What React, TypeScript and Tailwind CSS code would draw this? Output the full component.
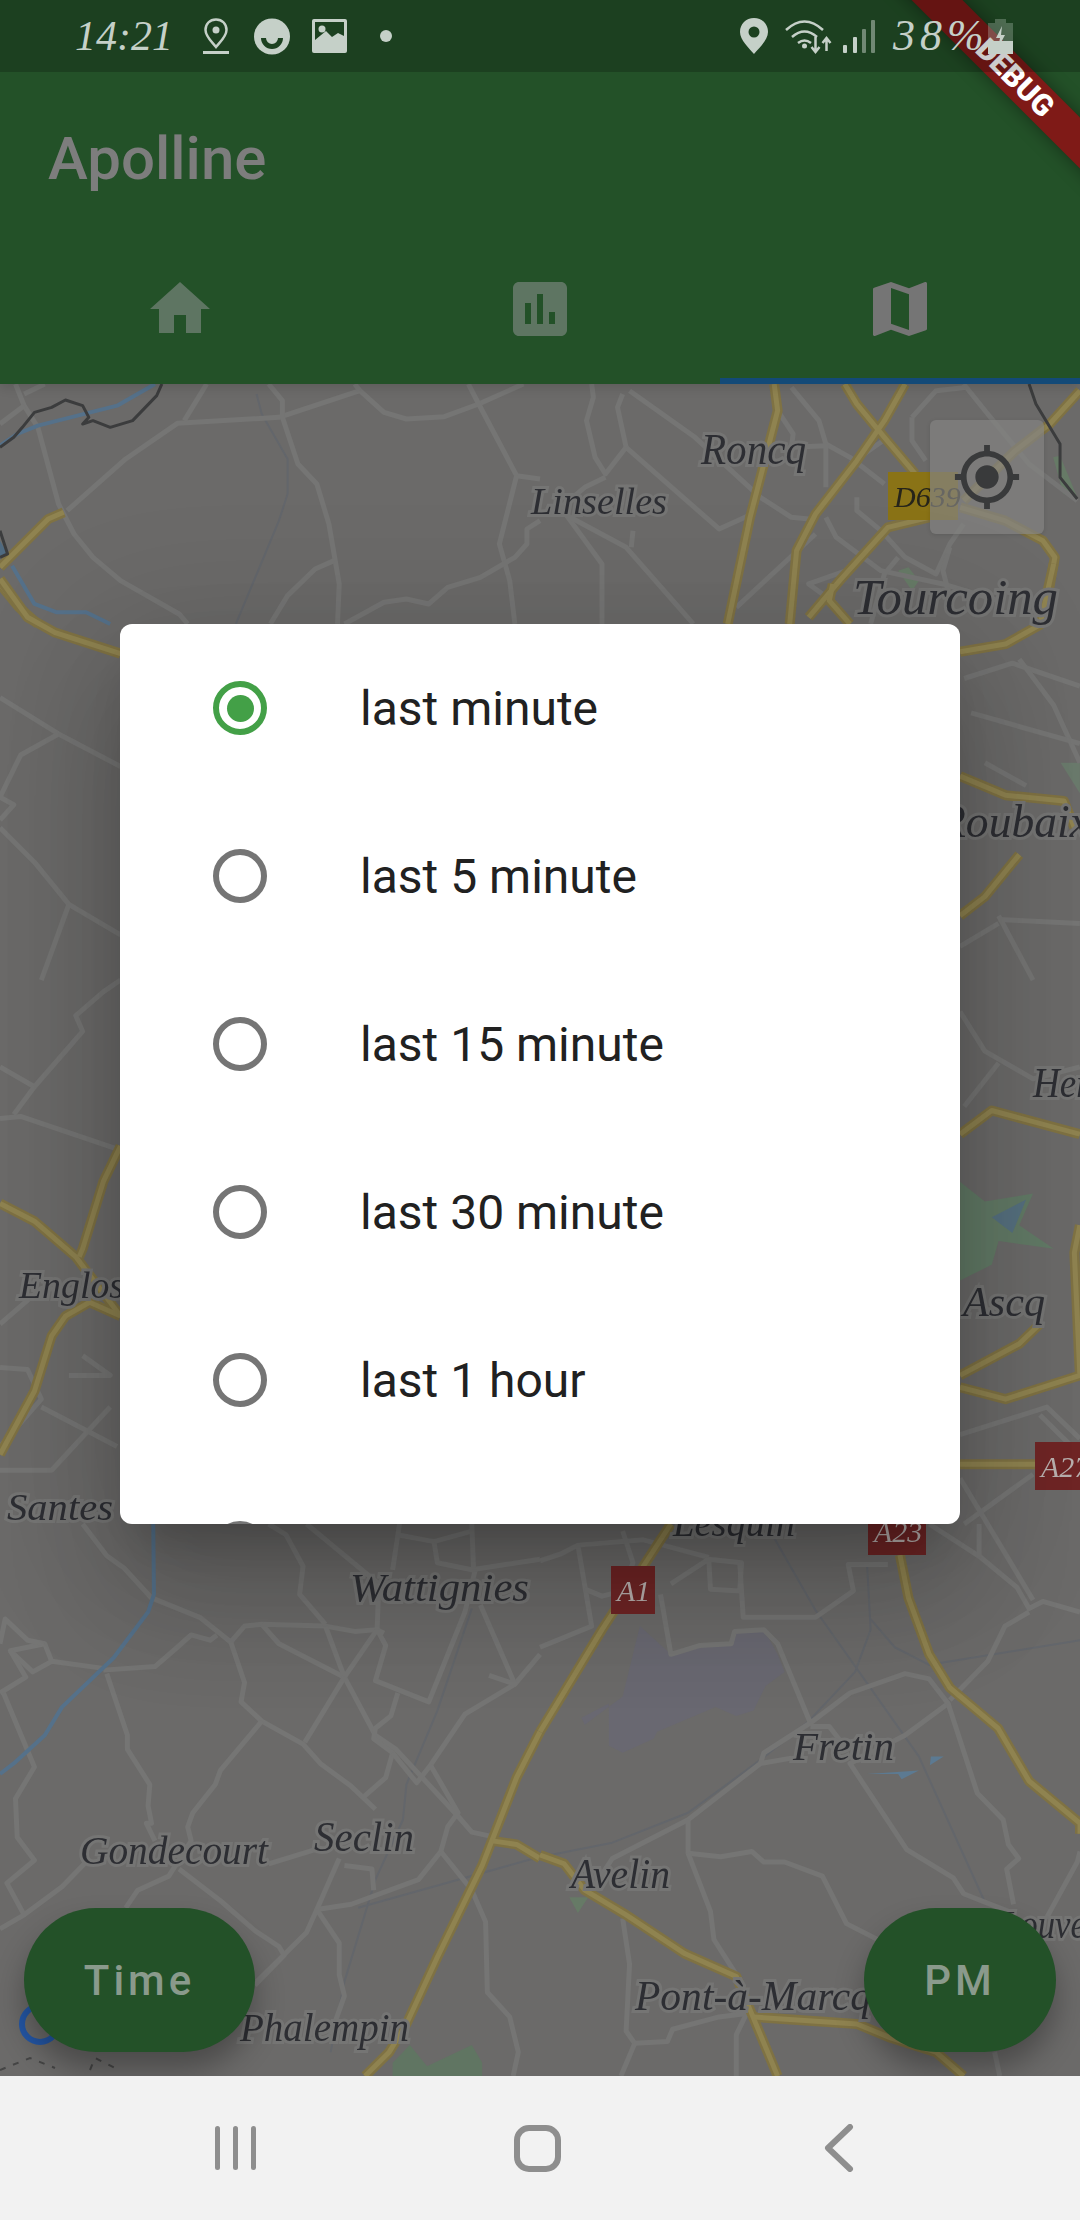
import { MdAssessment, MdGpsFixed, MdHome, MdMap } from 'react-icons/md'

type Region = {
  at: string
  areas?: [string, string][]
  minor?: string[]
  rail?: string[]
  water?: string[]
  border?: string[]
  highway?: string[]
}

// traced per crop, so every group has its own scale
const regions: Region[] = [
  {
    at: 'translate(0 384) scale(.3444 .3333)',
    areas: [['#4f6a80', '0,470 22,510 0,520']],
    minor: [
      '45,0 70,65 110,130 170,360 215,450 270,520 350,590 520,690 545,720',
      '0,120 70,65',
      '70,30 130,0',
      '195,380 365,225 515,118 810,100 1045,20 1115,85 1180,105 1290,98 1390,60 1520,0',
      '600,0 535,110',
      '1045,20 1030,0',
      '780,0 820,50 820,100 865,240 920,300 955,420 985,600 980,720',
      '1360,0 1390,60 1500,275 1568,285',
      '1500,275 1450,480 1480,590 1495,720',
      '970,530 915,555 835,635 785,720',
      '1568,410 1530,435 1530,480 1495,520 1395,580 1300,610 1245,660 1180,645 1115,655 1000,720',
    ],
    rail: ['745,30 760,90 835,225 835,330 810,410 685,720'],
    water: ['0,185 50,150 110,125 340,65 450,0', '35,545 100,660 165,685 250,685 320,720'],
    border: [
      '470,0 455,35 385,110 320,130 270,110 240,120 258,100 240,65 190,48 150,70 100,85 65,130 40,160 0,190',
      '0,440 22,510 0,520',
    ],
    highway: ['185,385 140,405 0,550', '0,600 55,670 110,720'],
  },
  {
    at: 'translate(540 384) scale(.3444 .3333)',
    areas: [
      ['#667a66', '1040,560 1070,550 1100,590 1080,620'],
      ['#667a66', '1490,220 1510,215 1560,340 1520,330'],
    ],
    minor: [
      '150,0 155,40 135,110 160,220 190,270 250,190 520,435 605,395',
      '240,30 225,70 250,190',
      '260,20 450,160 640,340 730,400 780,405',
      '190,280 130,310 60,370 180,540 180,720',
      '70,390 250,490 445,720',
      '270,440 265,490',
      '730,10 810,110 830,180 900,220 1000,300',
      '690,80 735,150 730,190 830,185 830,310',
      '1080,100 1150,20 1240,10',
      '1080,100 1080,170 1120,230',
      '1010,160 900,240',
      '830,400 860,460 990,560 1170,600 1330,650',
      '800,450 570,670',
      '890,560 780,600 860,660',
      '1040,520 1000,570 960,720',
      '1230,0 1300,90 1420,240 1560,350',
      '920,340 920,380 990,440 1060,520 1150,570 1190,480 1230,420',
      '1190,490 1170,560 1190,640',
    ],
    border: ['1420,0 1440,60 1510,180 1510,280 1560,345'],
    highway: [
      '680,0 690,80 610,400 545,720',
      '885,0 920,60 1000,160 1090,270',
      '1060,0 1000,110 920,230 800,390 745,500 725,720',
      '1130,400 1010,430 870,590 780,700',
      '850,600 840,650 900,720',
      '1568,20 1480,120 1380,200 1230,350',
      '1220,370 1350,410 1460,470 1495,520 1470,660 1440,720',
    ],
  },
  {
    at: 'translate(0 380) scale(.6887 .3827)',
    areas: [['#6a7a6c', '1540,1000 1568,1000 1568,1080']],
    minor: [
      '0,830 85,925 175,1010',
      '85,925 30,980 0,1090 20,1110 0,1150',
      '0,1170 50,1260 100,1370 175,1450',
      '100,1370 60,1568',
      '1400,780 1470,740 1568,800',
      '1480,730 1530,850 1568,1000',
      '1410,870 1568,950',
      '1430,1000 1490,1060',
      '1450,1410 1568,1420',
      '1450,1400 1500,1568',
      '1394,1480 1450,1420',
    ],
    highway: [
      '0,520 40,620 80,660 175,715',
      '1394,710 1460,690 1510,640 1530,480',
      '1394,1035 1460,1085 1545,1100 1560,1170',
      '1480,1240 1430,1350 1394,1400',
    ],
  },
  {
    at: 'translate(0 980) scale(.6887 .3954)',
    areas: [
      ['#627a66', '1394,510 1430,560 1500,540 1480,620 1530,680 1450,660 1440,720 1394,760'],
      ['#56707f', '1394,590 1440,600 1490,555 1470,640 1440,600'],
    ],
    minor: [
      '175,0 150,30 110,90 120,130 50,270 0,220',
      '0,350 30,345 175,430',
      '50,270 20,340',
      '0,870 60,780 175,790',
      '120,950 160,1000 100,1000',
      '0,980 40,985 60,1060 0,1180',
      '60,1080 170,1180',
      '0,1240 75,1240 160,1080',
      '1394,80 1430,180 1500,250 1568,220',
      '1400,320 1450,210',
      '1394,1150 1520,1080 1568,1160',
      '1400,1376 1500,1250',
      '1394,1260 1500,1568',
      '1510,1100 1568,1200',
    ],
    highway: [
      '0,565 50,610 110,700 175,850',
      '175,420 150,510 120,680 115,700',
      '175,850 130,815 95,850 75,900 50,1040 0,1200',
      '1394,390 1440,330 1568,390',
      '1394,1000 1480,920 1510,870',
      '1394,1030 1460,1060 1568,1000 1560,690 1568,620',
      '1394,1225 1510,1225',
    ],
  },
  {
    at: 'translate(0 1524) scale(.3444 .3521)',
    areas: [['#607562', '1140,1530 1190,1480 1240,1540 1370,1480 1400,1530 1400,1568 1140,1568']],
    minor: [
      '240,0 310,90 360,125 440,210 580,265 670,335 710,290 760,285 945,290 1030,305 1095,300 1120,345 1090,445 1245,505 1350,250 1380,130',
      '670,335 710,450 700,505 760,560 880,625 930,680 1020,745 1090,810',
      '760,560 640,700 625,740 560,820 545,860 555,900 490,1000 400,1040 365,1090',
      '300,410 150,390 95,420 30,360 130,340 150,390',
      '0,340 15,270 80,330 130,340',
      '0,480 75,435 30,360',
      '300,415 450,405 515,350 555,315 610,330 630,315',
      '310,425 370,600 370,640 435,740 430,800 440,850 425,850 450,900',
      '10,480 100,690 45,780 50,890 100,955 20,1020 70,1110 0,1150',
      '70,1110 180,1030 250,960',
      '520,980 640,1070 740,1155 810,1200 825,1225 740,1310',
      '760,285 810,340 1000,435 1090,600 1150,640 1330,830 1370,875 1440,890',
      '945,290 1000,435 885,620',
      '1000,435 1095,300 1115,310',
      '1155,480 1135,545 1090,580 1085,610 1140,650 1120,720 1050,780',
      '1495,455 1350,540 1250,685 1210,735 1140,650',
      '1250,685 1330,820 1300,860 1280,930 1215,1010 1020,1080 920,1095 890,1160 745,1300',
      '1280,930 1370,1040 1410,1130 1415,1330 1480,1400 1505,1500 1490,1568',
      '920,1095 985,1190 985,1280 1000,1340 960,1450',
      '1495,455 1568,370',
      '1420,430 1495,455 1395,230',
      '780,965 915,925',
      '985,950 920,1095',
      '1000,970 1080,980 1085,1040',
      '1150,30 1260,50 1270,110 1370,130 1568,100',
      '1160,0 1140,130',
      '1260,50 1370,20',
      '1370,0 1375,130',
      '780,0 830,30 880,120 870,200 945,285',
      '890,0 1100,170 1095,300',
    ],
    rail: ['1370,240 1270,530 1180,740 1170,840 1090,1010 1000,1300 960,1500', '1040,1090 1568,945'],
    water: ['445,0 447,200 430,250 330,380 180,520 130,600 40,680 0,710'],
    highway: ['1568,590 1500,720 1400,970 1270,1230 1180,1420 1130,1500 1060,1568', '1430,900 1500,910 1568,950'],
  },
  {
    at: 'translate(540 1524) scale(.3444 .3521)',
    areas: [
      [
        '#696871',
        '290,290 380,370 470,345 555,340 565,305 650,300 690,370 710,420 655,460 620,530 570,545 510,520 340,590 330,610 240,650 200,630 200,510 120,550 130,570 240,490',
      ],
      ['#667a66', '85,1060 140,1060 110,1105'],
      ['#5c7a92', '950,710 1100,700 1050,725 1040,710'],
      ['#5c7a92', '1135,660 1172,660 1132,685'],
    ],
    minor: [
      '0,105 60,85 110,60 240,50 300,45 490,95',
      '110,60 150,290 0,350',
      '240,20 270,110 240,190 180,205 130,185',
      '350,200 380,370 465,345 555,340 565,305 650,300 690,340 785,565 900,480 1060,425 1130,440 1185,510 1060,600 900,680 1065,925 1200,1005 1230,1050 1360,1100',
      '380,170 490,100 585,110 580,190 495,185 490,100',
      '580,110 590,265 800,265 910,190 895,115 1010,115',
      '1185,510 1270,765 1345,840 1360,910 1390,950 1355,980 1375,1080',
      '1130,0 1280,95 1385,180 1420,240 1460,220 1568,250',
      '1275,0 1275,95',
      '1420,250 1350,290 1300,390 1190,500',
      '785,575 840,575 875,620',
      '785,565 650,650 640,680 730,665',
      '640,680 430,840 210,950 150,1040',
      '430,840 430,935 525,945 615,930 650,960 710,960 820,1000 890,1135 1000,1190',
      '430,935 495,1100 505,1180 570,1280',
      '240,1120 260,1250 250,1440 275,1475 370,1470 385,1435 520,1400 600,1390',
      '275,1475 235,1568',
      '600,1390 570,1450 570,1568',
      '1568,930 1560,960 1470,1120',
      '1320,1500 1335,1568',
    ],
    rail: [
      '680,40 800,245 1100,660 1290,1070',
      '950,120 960,300 915,420 780,560 640,670 430,820 210,905 30,940',
      '960,270 1030,350 1130,400 1568,330',
    ],
    highway: [
      '380,0 300,120 180,300 0,590',
      '1045,88 1070,210 1130,370 1190,465 1330,580 1420,730 1568,850 1568,880',
      '0,940 70,965 130,1040 250,1110 420,1220 570,1285 610,1380 690,1568',
      '620,1400 920,1420 1020,1460 1150,1500 1230,1568',
    ],
  },
]

const labels = [
  { text: 'Roncq', x: 701, y: 464, w: 105, size: 44 },
  { text: 'Linselles', x: 531, y: 514, w: 136, size: 38 },
  { text: 'Tourcoing', x: 853, y: 614, w: 205, size: 50 },
  { text: 'Roubaix', x: 938, y: 837, w: 152, size: 46 },
  { text: 'Hem', x: 1033, y: 1097, w: 70, size: 42 },
  { text: 'Englos', x: 19, y: 1298, w: 105, size: 38 },
  { text: 'Ascq', x: 963, y: 1316, w: 82, size: 42 },
  { text: 'Santes', x: 7, y: 1520, w: 106, size: 38 },
  { text: 'Lesquin', x: 673, y: 1536, w: 122, size: 38 },
  { text: 'Wattignies', x: 350, y: 1601, w: 179, size: 40 },
  { text: 'Fretin', x: 793, y: 1760, w: 101, size: 40 },
  { text: 'Gondecourt', x: 80, y: 1864, w: 188, size: 40 },
  { text: 'Seclin', x: 314, y: 1851, w: 100, size: 42 },
  { text: 'Avelin', x: 571, y: 1888, w: 99, size: 42 },
  { text: 'Pont-à-Marcq', x: 635, y: 2010, w: 236, size: 42 },
  { text: 'Phalempin', x: 240, y: 2041, w: 169, size: 40 },
  { text: 'Louve', x: 1001, y: 1938, w: 85, size: 40 },
]

const shields = [
  { text: 'D639', x: 888, y: 472, w: 70, h: 48, fill: '#8a7316', ink: '#26241a' },
  { text: 'A27', x: 1035, y: 1442, w: 50, h: 48, fill: '#6f2525', ink: '#b9b0ae' },
  { text: 'A23', x: 868, y: 1510, w: 58, h: 45, fill: '#6f2525', ink: '#b9b0ae' },
  { text: 'A1', x: 611, y: 1566, w: 44, h: 48, fill: '#6f2525', ink: '#b9b0ae' },
]

const options = ['last minute', 'last 5 minute', 'last 15 minute', 'last 30 minute', 'last 1 hour']

function Lines({ points, color, width }: { points?: string[]; color: string; width: number }) {
  return (
    <>
      {points?.map((p) => (
        <polyline
          key={p}
          points={p}
          fill="none"
          stroke={color}
          strokeWidth={width}
          strokeLinejoin="round"
          vectorEffect="non-scaling-stroke"
        />
      ))}
    </>
  )
}

function MapDrawing() {
  return (
    <svg className="absolute inset-0 h-full w-full blur-[0.6px]" viewBox="0 384 1080 1692">
      <rect x="0" y="384" width="1080" height="1692" fill="#6b6a69" />
      {regions.map((r) => (
        <g key={r.at} transform={r.at}>
          {r.areas?.map(([fill, p]) => <polygon key={p} points={p} fill={fill} />)}
          <Lines points={r.rail} color="#63666b" width={2} />
          <Lines points={r.minor} color="#757574" width={5} />
          <Lines points={r.water} color="#55718a" width={4} />
          <Lines points={r.highway} color="#7f7243" width={10} />
          <Lines points={r.highway} color="#8f8350" width={5} />
          <Lines points={r.border} color="#3b3c3d" width={3} />
        </g>
      ))}
      <circle cx="40" cy="2024" r="18" fill="none" stroke="#2457a6" strokeWidth="6" />
      <polyline points="0,2070 30,2058 55,2068" fill="none" stroke="#454545" strokeWidth="2" strokeDasharray="6 8" />
      <polyline points="90,2070 95,2058 115,2068" fill="none" stroke="#454545" strokeWidth="2" strokeDasharray="6 8" />
      {shields.map((s) => (
        <g key={s.text}>
          <rect x={s.x} y={s.y} width={s.w} height={s.h} fill={s.fill} />
          <text
            x={s.x + 6}
            y={s.y + s.h - 13}
            fill={s.ink}
            fontSize="30"
            className="font-['Liberation_Serif',serif] italic"
          >
            {s.text}
          </text>
        </g>
      ))}
      {labels.map((l) => (
        <text
          key={l.text}
          x={l.x}
          y={l.y}
          textLength={l.w}
          lengthAdjust="spacingAndGlyphs"
          fontSize={l.size}
          fill="#2d2e33"
          stroke="#757574"
          strokeWidth="6"
          className="font-['Liberation_Serif',serif] italic [paint-order:stroke]"
        >
          {l.text}
        </text>
      ))}
    </svg>
  )
}

function Radio({ checked }: { checked?: boolean }) {
  return (
    <span
      className={
        checked
          ? 'flex h-[54px] w-[54px] shrink-0 items-center justify-center rounded-full border-[6px] border-[#43a047]'
          : 'flex h-[54px] w-[54px] shrink-0 items-center justify-center rounded-full border-[6px] border-[#757575]'
      }
    >
      {checked && <span className="h-[27px] w-[27px] rounded-full bg-[#43a047]" />}
    </span>
  )
}

function StatusBar() {
  const ink = '#c5d0c8'
  const dark = '#1c4120'
  return (
    <div className="absolute inset-x-0 top-0 z-30 flex h-[72px] items-center justify-between bg-black/20 pl-[75px] pr-[67px] text-[#c5d0c8]">
      <div className="flex items-center">
        <span className="w-[128px] font-['Liberation_Serif',serif] text-[42px] italic leading-none">14:21</span>
        <svg width="26" height="36" viewBox="0 0 26 36" fill="none">
          <path d="M13 1.5C6.6 1.5 2.5 6 2.5 12c0 6.500 6.500 12 10.500 17 4-5 10.500-10.500 10.500-17 0-6-4.100-10.500-10.500-10.500z" stroke={ink} strokeWidth="2.500" />
          <circle cx="13" cy="12" r="3.500" fill={ink} />
          <rect y="33" width="26" height="3" fill={ink} />
        </svg>
        <svg className="ml-[25px]" width="36" height="37" viewBox="0 0 36 37">
          <circle cx="18" cy="18.500" r="18" fill={ink} />
          <path d="M9.500 20a8.500 8.500 0 0 0 17 0" fill="none" stroke={dark} strokeWidth="5" />
        </svg>
        <svg className="ml-[22px]" width="35" height="34" viewBox="0 0 35 34">
          <rect width="35" height="34" rx="2" fill={ink} />
          <path d="M3 3h29v14l-6-3-6 4-6-6-11 9z" fill={dark} />
          <circle cx="10" cy="10" r="3.500" fill={ink} />
        </svg>
        <span className="ml-[33px] h-3 w-3 rounded-full bg-[#c5d0c8]" />
      </div>
      <div className="flex items-center">
        <svg width="28" height="36" viewBox="0 0 28 36">
          <path d="M14 0C6 0 0 6 0 14c0 8 9 16 14 22 5-6 14-14 14-22C28 6 22 0 14 0z" fill={ink} />
          <circle cx="14" cy="14" r="5.500" fill={dark} />
        </svg>
        <svg className="ml-[16px]" width="48" height="36" viewBox="0 0 48 36" fill="none" stroke={ink} strokeWidth="2.500">
          <path d="M2 12Q20.500-5 39 12M8 19Q20.500 8 33 19M14 25Q20.500 20 27 25" />
          <circle cx="20.500" cy="28" r="2.500" fill={ink} stroke="none" />
          <path d="M31.500 19v14M27.500 29l4 5 4-5M42.500 33V21M38.500 25l4-5 4 5" />
        </svg>
        <svg className="ml-[11px]" width="32" height="34" viewBox="0 0 32 34" fill={ink}>
          <rect x="0" y="26" width="4" height="8" rx="1" />
          <rect x="10" y="18" width="4" height="16" rx="1" />
          <rect x="19" y="10" width="4" height="24" rx="1" opacity=".5" />
          <rect x="28" y="1" width="4" height="33" rx="1" opacity=".5" />
        </svg>
        <span className="ml-[18px] w-[95px] font-['Liberation_Serif',serif] text-[44px] italic leading-none tracking-[5px]">
          38%
        </span>
        <svg width="25" height="35" viewBox="0 0 25 35">
          <rect x="7" width="11" height="4" fill={ink} opacity=".3" />
          <rect y="4" width="25" height="31" fill={ink} opacity=".3" />
          <rect y="22" width="25" height="13" fill={ink} />
          <path d="M14 7l-6 12h4l-2 10 7-13h-4z" fill={ink} />
        </svg>
      </div>
    </div>
  )
}

export default function App() {
  return (
    <div className="relative flex h-[2220px] w-[1080px] flex-col overflow-hidden bg-[#6b6a69] font-['Roboto',sans-serif]">
      <header className="relative z-10 flex h-[384px] shrink-0 flex-col bg-[#235128] pt-[72px] shadow-[0_4px_10px_rgba(0,0,0,0.12)]">
        <div className="flex h-[168px] items-center pl-[48px] pt-[6px]">
          <h1 className="text-[60px] font-medium leading-none text-[#7d7d7d]">Apolline</h1>
        </div>
        <div className="grid h-[144px] grid-cols-3">
          <div className="flex items-start justify-center pt-[33px]">
            <MdHome size={72} color="#5e7562" />
          </div>
          <div className="flex items-start justify-center pt-[33px]">
            <MdAssessment size={72} color="#5e7562" />
          </div>
          <div className="flex items-start justify-center border-b-[6px] border-[#134a78] pt-[33px]">
            <MdMap size={72} color="#757575" />
          </div>
        </div>
      </header>

      <main className="relative min-h-0 flex-1 overflow-hidden">
        <MapDrawing />
        <div className="absolute right-[36px] top-[36px] flex h-[114px] w-[114px] items-center justify-center rounded-[6px] bg-[#838382]/70 shadow-[0_1px_4px_rgba(0,0,0,0.12)]">
          <MdGpsFixed size={70} color="#393a3b" />
        </div>
        <button className="absolute bottom-[24px] left-[24px] flex h-[144px] w-[231px] items-center justify-center rounded-[72px] bg-[#235128] text-[42px] font-medium tracking-[4px] text-[#8a9a8c] shadow-[0_18px_30px_rgba(0,0,0,0.3)]">
          Time
        </button>
        <button className="absolute bottom-[24px] right-[24px] flex h-[144px] w-[192px] items-center justify-center rounded-[72px] bg-[#235128] text-[42px] font-medium tracking-[4px] text-[#8a9a8c] shadow-[0_18px_30px_rgba(0,0,0,0.3)]">
          PM
        </button>
      </main>

      <nav className="grid h-[144px] shrink-0 grid-cols-[302px_302px_302px] items-center bg-[#f2f2f2] pl-[84px]">
        <div className="flex justify-center gap-[13px]">
          <span className="h-[44px] w-[5px] rounded-full bg-[#8e8e8e]" />
          <span className="h-[44px] w-[5px] rounded-full bg-[#8e8e8e]" />
          <span className="h-[44px] w-[5px] rounded-full bg-[#8e8e8e]" />
        </div>
        <div className="flex justify-center">
          <span className="h-[47px] w-[47px] rounded-[15px] border-[6px] border-[#8e8e8e]" />
        </div>
        <div className="flex justify-center">
          <svg width="30" height="48" viewBox="0 0 30 48" fill="none" stroke="#8e8e8e" strokeWidth="6" strokeLinecap="round" strokeLinejoin="round">
            <path d="M26 3 4 24l22 21" />
          </svg>
        </div>
      </nav>

      {/* dialog */}
      <div className="absolute inset-x-0 bottom-[144px] top-[72px] z-20 flex items-center justify-center">
        <div className="h-[900px] w-[840px] overflow-hidden rounded-[12px] bg-white shadow-[0_72px_114px_9px_rgba(0,0,0,0.14),0_27px_138px_24px_rgba(0,0,0,0.12),0_33px_45px_-21px_rgba(0,0,0,0.2)]">
          {options.map((o, i) => (
            <div key={o} className="flex h-[168px] items-center gap-[93px] pl-[93px]">
              <Radio checked={i === 0} />
              <span className="pt-[2px] text-[48px] leading-none text-[#212121]">{o}</span>
            </div>
          ))}
          <div className="flex h-[168px] items-center pl-[93px]">
            <Radio />
          </div>
        </div>
      </div>

      <div className="absolute left-[815px] top-[60px] z-[25] h-[36px] w-[400px] rotate-45 bg-[#7f1a17] text-center text-[30px] font-black leading-[36px] text-white shadow-[0_0_18px_rgba(0,0,0,0.4)]">
        DEBUG
      </div>

      <StatusBar />
    </div>
  )
}
